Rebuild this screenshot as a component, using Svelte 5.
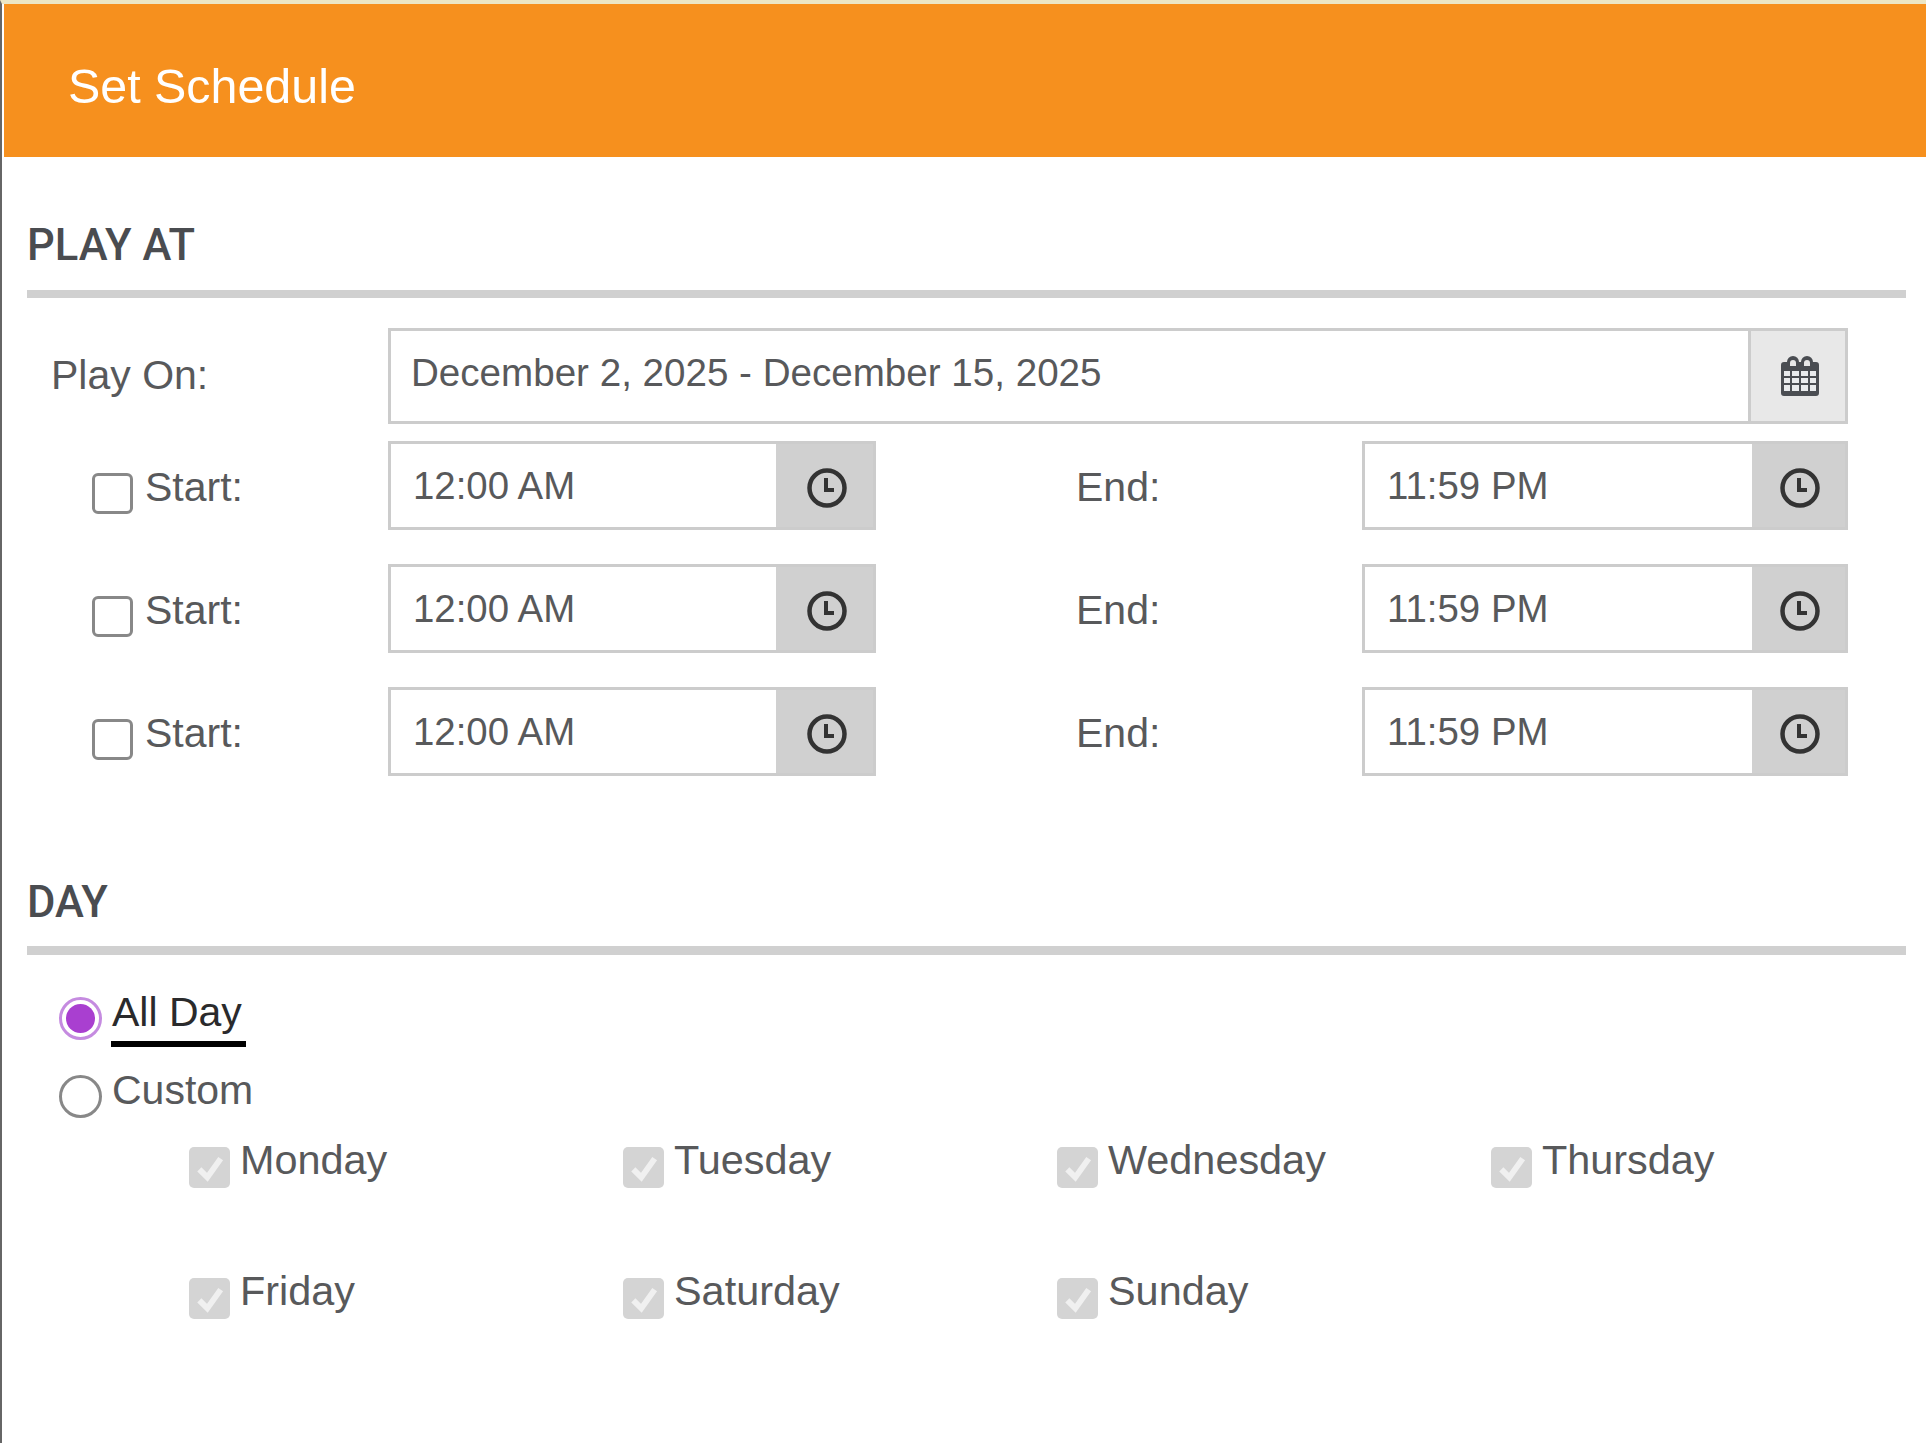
<script>
  const times = [1, 2, 3];
  const days = ['Monday', 'Tuesday', 'Wednesday', 'Thursday', 'Friday', 'Saturday', 'Sunday'];
</script>

{#snippet clock()}
  <svg class="clock" viewBox="0 0 42 42" aria-hidden="true">
    <circle cx="21" cy="21" r="17.5" fill="none" stroke="#333" stroke-width="4.5" />
    <path d="M20 11v12h8" fill="none" stroke="#333" stroke-width="4" />
  </svg>
{/snippet}

<div class="page">
  <header class="head">Set Schedule</header>

  <section class="block">
    <h2>PLAY AT</h2>

    <div class="row date-row">
      <span class="label play-on">Play On:</span>
      <div class="field date">
        <div class="value">December 2, 2025 - December 15, 2025</div>
        <div class="addon light">
          <svg class="cal" viewBox="0 0 38 42" aria-hidden="true">
            <path d="M3 8h3a6 6 0 0 1 12 0h2a6 6 0 0 1 12 0h3a3 3 0 0 1 3 3v28a3 3 0 0 1-3 3H3a3 3 0 0 1-3-3V11a3 3 0 0 1 3-3z" fill="#4a4d52" />
            <path d="M9 9a3 3 0 0 1 6 0v3H9zM23 9a3 3 0 0 1 6 0v3h-6z" fill="#e8e8e8" />
            <path d="M3 17h6v5H3zM11 17h7v5h-7zM20 17h7v5h-7zM29 17h6v5h-6zM3 24h6v5H3zM11 24h7v5h-7zM20 24h7v5h-7zM29 24h6v5h-6zM3 31h6v6H3zM11 31h7v6h-7zM20 31h7v6h-7zM29 31h6v6h-6z" fill="#e9ebed" />
          </svg>
        </div>
      </div>
    </div>

    {#each times as t}
      <div class="row time-row">
        <div class="label start">
          <span class="box"></span>
          <span>Start:</span>
        </div>
        <div class="field">
          <div class="value">12:00 AM</div>
          <div class="addon wide">{@render clock()}</div>
        </div>
        <span class="label end">End:</span>
        <div class="field">
          <div class="value">11:59 PM</div>
          <div class="addon narrow">{@render clock()}</div>
        </div>
      </div>
    {/each}
  </section>

  <section class="block day-block">
    <h2>DAY</h2>

    <div class="radios">
      <div class="radio-row">
        <span class="radio on"></span>
        <span class="radio-text active">All Day</span>
      </div>
      <div class="radio-row">
        <span class="radio"></span>
        <span class="radio-text">Custom</span>
      </div>
    </div>

    <div class="days">
      {#each days as d}
        <div class="day">
          <span class="tick">
            <svg viewBox="0 0 24 24" aria-hidden="true">
              <path d="M4 13l6 6L20 5" fill="none" stroke="#f0f0f0" stroke-width="4.4" />
            </svg>
          </span>
          <span>{d}</span>
        </div>
      {/each}
    </div>
  </section>
</div>

<style>
  :global(body) {
    margin: 0;
    background: #fff;
  }

  .page {
    width: 1926px;
    height: 1443px;
    box-sizing: border-box;
    border-top: 4px solid #ece6c4;
    border-left: 2px solid #666;
    background: #fff;
    font-family: "Liberation Sans", Arial, sans-serif;
    color: #58595b;
    overflow: hidden;
  }

  .head {
    height: 153px;
    margin-left: 2px;
    padding-left: 64px;
    box-sizing: border-box;
    background: #f6901e;
    color: #fff;
    font-size: 48.4px;
    line-height: 165px;
  }

  .block {
    padding: 0 20px 0 25px;
  }

  h2 {
    margin: 0;
    height: 141px;
    box-sizing: border-box;
    padding-top: 64px;
    border-bottom: 8px solid #d0d0d0;
    font-family: Roboto, sans-serif;
    font-size: 43.5px;
    font-weight: 500;
    line-height: 50px;
    color: #4a4c50;
  }

  .row {
    display: grid;
    align-items: center;
  }

  .date-row {
    grid-template-columns: 361px 1460px;
    height: 96px;
    margin-top: 30px;
    margin-bottom: 17px;
  }

  .time-row {
    grid-template-columns: 361px 488px 486px 486px;
    height: 89px;
    margin-bottom: 34px;
  }

  .label {
    font-size: 41px;
  }

  .play-on {
    padding-left: 24px;
    padding-bottom: 2px;
  }

  .start {
    display: flex;
    align-items: center;
    gap: 12px;
    padding-left: 65px;
    padding-top: 4px;
  }

  .box {
    width: 41px;
    height: 41px;
    box-sizing: border-box;
    margin-top: 12px;
    border: 3px solid #888;
    border-radius: 6px;
  }

  .end {
    padding-left: 200px;
    padding-top: 4px;
  }

  .field {
    display: flex;
    height: 100%;
    box-sizing: border-box;
    border: 3px solid #ccc;
    background: #fff;
  }

  .value {
    flex: 1;
    padding-left: 22px;
    font-size: 38.4px;
    line-height: 83px;
  }

  .date .value {
    padding-left: 20px;
    font-size: 38.6px;
    line-height: 84px;
  }

  .addon {
    display: flex;
    align-items: center;
    justify-content: center;
    box-sizing: border-box;
    background: #d0d0d0;
  }

  .addon.wide {
    width: 97px;
    padding-left: 4px;
  }

  .addon.narrow {
    width: 93px;
    padding-left: 3px;
  }

  .addon.light {
    width: 97px;
    padding-left: 3px;
    border-left: 3px solid #ccc;
    background: #e8e8e8;
  }

  .clock {
    width: 42px;
    height: 42px;
    margin-top: 4px;
  }

  .cal {
    width: 38px;
    height: 42px;
    margin-bottom: 3px;
  }

  .day-block h2 {
    height: 145px;
    padding-top: 68px;
    border-bottom-width: 9px;
  }

  .radios {
    padding-left: 32px;
    margin-top: 42px;
    display: flex;
    flex-direction: column;
    gap: 35px;
  }

  .radio-row {
    display: flex;
    align-items: flex-start;
    gap: 10px;
    height: 43px;
    color: #58595b;
  }

  .radio {
    flex: none;
    width: 43px;
    height: 43px;
    box-sizing: border-box;
    border: 3px solid #888;
    border-radius: 50%;
  }

  .radio.on {
    border-color: #c58be0;
    padding: 4px;
    background: #a93fd0;
    background-clip: content-box;
  }

  .radio-text {
    font-size: 41px;
    line-height: 31px;
  }

  .active {
    margin-left: -1px;
    padding: 0 4px 13px 1px;
    border-bottom: 6px solid #000;
    color: #2a2a2c;
  }

  .days {
    display: grid;
    grid-template-columns: repeat(4, 434px);
    grid-auto-rows: 131px;
    padding-left: 162px;
    margin-top: 26px;
  }

  .day {
    display: flex;
    align-items: flex-start;
    gap: 10px;
    font-size: 41.4px;
    line-height: 33px;
  }

  .tick {
    display: flex;
    align-items: center;
    justify-content: center;
    width: 41px;
    height: 41px;
    margin-top: 3px;
    border-radius: 5px;
    background: #d4d4d4;
  }

  .tick svg {
    width: 32px;
    height: 32px;
  }
</style>
